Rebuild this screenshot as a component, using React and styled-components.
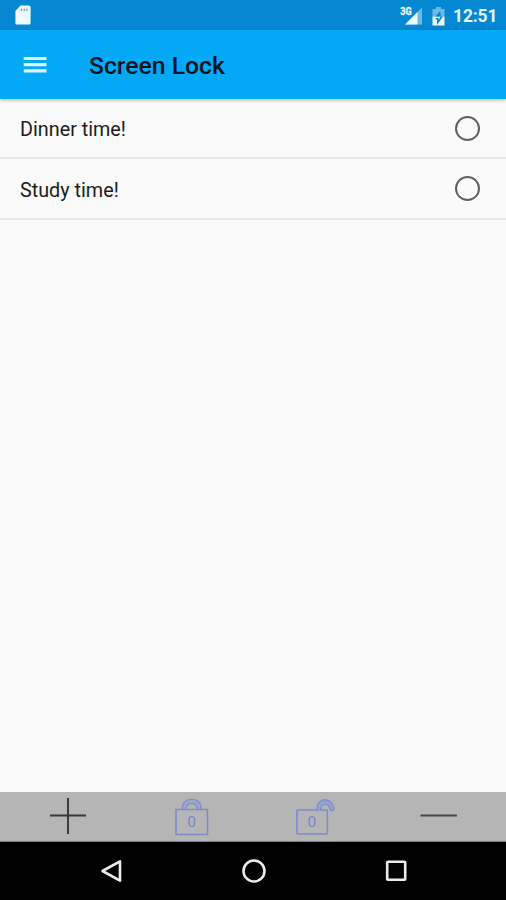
import React from "react";
import styled, { createGlobalStyle } from "styled-components";

const GlobalStyle = createGlobalStyle`
  * { box-sizing: border-box; }
  body { margin: 0; background: #fafafa; font-family: Roboto, "Noto Sans", sans-serif; }
  svg { display: block; }
`;

const Screen = styled.div`
  display: flex;
  flex-direction: column;
  width: 506px;
  height: 900px;
  background: #fafafa;
  overflow: hidden;
`;

const StatusBar = styled.div`
  display: flex;
  align-items: center;
  flex: none;
  height: 30px;
  padding: 1px 9px 0 14px;
  background: #0488d1;
`;

const StatusIcons = styled.div`
  display: flex;
  align-items: center;
  gap: 9px;
  margin-left: auto;
`;

const Clock = styled.span`
  width: 44px;
  margin-left: -2px;
  font-size: 17.5px;
  line-height: 28px;
  font-weight: 700;
  letter-spacing: -0.15px;
  color: #e4f4fc;
  white-space: nowrap;
`;

const AppBar = styled.header`
  display: flex;
  align-items: center;
  flex: none;
  height: 69px;
  padding: 0 23px;
  gap: 42px;
  background: #04a9f5;
  box-shadow: 0 1px 4px rgba(0, 0, 0, 0.3);
  z-index: 1;
`;

const Title = styled.h1`
  margin: 2px 0 0;
  font-size: 24.7px;
  line-height: 30px;
  font-weight: 500;
  color: #03161f;
  white-space: nowrap;
`;

const List = styled.main`
  flex: 1;
`;

const Row = styled.div`
  display: flex;
  align-items: center;
  justify-content: space-between;
  height: ${(p) => p.$height}px;
  padding: 0 26px 0 20px;
  border-bottom: 2px solid #e6e6e6;
`;

const RowLabel = styled.span`
  font-size: 19.8px;
  line-height: 26px;
  font-weight: 400;
  color: #1c1c1c;
  padding-top: ${(p) => p.$offset}px;
`;

const Radio = styled.span`
  width: 25px;
  height: 25px;
  border: 2px solid #5f5f5f;
  border-radius: 50%;
`;

const ActionBar = styled.footer`
  display: flex;
  justify-content: space-between;
  flex: none;
  height: 50px;
  padding: 0 48px;
  background: #b5b5b5;
  border-bottom: 1px solid #7c7c7c;
`;

const NavBar = styled.nav`
  display: flex;
  align-items: center;
  justify-content: space-between;
  flex: none;
  height: 58px;
  padding: 0 97px 0 98px;
  background: #000;
`;

const SdCardIcon = () => (
  <svg width="18" height="22" viewBox="0 0 18 22">
    <path d="M6.5 .5H15a1.600 1.600 0 0 1 1.600 1.600V18a1.600 1.600 0 0 1-1.600 1.600H3A1.600 1.600 0 0 1 1.400 18V6Z" fill="#eff9ff" />
    <path d="M7.500 3.700v2.200M10.300 3.700v2.200M13 3.700v2.200" stroke="#5aaede" strokeWidth="1.300" />
  </svg>
);

const SignalIcon = () => (
  <svg width="23" height="22" viewBox="0 0 23 22">
    <path d="M22 2.500V19.500H5Z" fill="#6dbbe5" />
    <path d="M17.500 7V19.500H5Z" fill="#eff9ff" />
    <text x="0.300" y="10" fontSize="10" fontWeight="700" fill="#eff9ff" stroke="#eff9ff" strokeWidth=".3" textLength="11.500" lengthAdjust="spacingAndGlyphs">3G</text>
  </svg>
);

const BatteryIcon = () => (
  <svg width="14" height="22" viewBox="0.500 0 14 22">
    <path d="M1 4h3.500V2h5v2H13v7.500H1Z" fill="#6dbbe5" />
    <path d="M1 11.500h12v9H1Z" fill="#eff9ff" />
    <path d="M8.500 6 4 11.500h5.500Z" fill="#0488d1" />
    <path d="M10.500 11.500 6.300 17.500v-3.800H4" fill="none" stroke="#0488d1" strokeWidth="1.600" />
  </svg>
);

const MenuIcon = () => (
  <svg width="24" height="18" viewBox="0 0 24 18">
    <path d="M.7 2.500h22.800M.7 8.700h22.800M.7 14.900h22.800" stroke="#dff5ff" strokeWidth="3.200" />
  </svg>
);

const PlusIcon = () => (
  <svg width="40" height="49" viewBox="0 0 40 49">
    <path d="M2 23.500h36M20 6v36" stroke="#383838" strokeWidth="1.900" />
  </svg>
);

const MinusIcon = () => (
  <svg width="40" height="49" viewBox="0 0 40 49">
    <path d="M2.500 23.500h36.500" stroke="#484848" strokeWidth="2.200" />
  </svg>
);

const LockIcon = () => (
  <svg width="40" height="49" viewBox="-0.700 0 40 49">
    <g fill="none" stroke="#7b8bd0" strokeWidth="1.500">
      <rect x="4.300" y="17.500" width="31.500" height="25" />
      <path d="M10.500 17.500v-1.500a9.500 8.800 0 0 1 19 0v1.500M14.500 17.500v-1.200a5.500 5 0 0 1 11 0v1.200" />
    </g>
    <path d="M12.500 17v-1a7.500 6.800 0 0 1 15 0v1" fill="none" stroke="#9aa5c8" strokeWidth="2" />
    <text x="20" y="35.200" textAnchor="middle" fontSize="15.500" fill="#7586d2">0</text>
  </svg>
);

const UnlockIcon = () => (
  <svg width="40" height="49" viewBox="-0.600 0 40 49">
    <g fill="none" stroke="#7b8bd0" strokeWidth="1.500">
      <rect x="1.300" y="18" width="30.500" height="24" rx=".8" />
      <path d="M21.300 18v-3c.6-4 4-7.300 8-7.300 4.800 0 8.700 4.200 9.300 9.300l-1.200 1.500-2.600-.3c-.8-3.300-2.600-5.700-5.300-5.700-3 0-4.300 2-4.500 5.500" fill="#94a1cc" strokeWidth="1.200" />
    </g>
    <text x="16.200" y="35" textAnchor="middle" fontSize="15.500" fill="#7586d2">0</text>
  </svg>
);

const BackIcon = () => (
  <svg width="28" height="28" viewBox="0 0 28 28">
    <path d="M4.500 14 22 4.300v19.400Z" fill="none" stroke="#ececec" strokeWidth="2.600" strokeLinejoin="round" />
  </svg>
);

const HomeIcon = () => (
  <svg width="28" height="28" viewBox="0 0 28 28">
    <circle cx="14" cy="14" r="10.500" fill="none" stroke="#ececec" strokeWidth="2.600" />
  </svg>
);

const RecentsIcon = () => (
  <svg width="28" height="28" viewBox="0 0 28 28">
    <rect x="6.200" y="4.800" width="18" height="18" rx=".8" fill="none" stroke="#ececec" strokeWidth="2.600" />
  </svg>
);

const items = [
  { label: "Dinner time!", height: 60, offset: 3 },
  { label: "Study time!", height: 61, offset: 4 },
];

export default function App() {
  return (
    <Screen>
      <GlobalStyle />
      <StatusBar>
        <SdCardIcon />
        <StatusIcons>
          <SignalIcon />
          <BatteryIcon />
          <Clock>12:51</Clock>
        </StatusIcons>
      </StatusBar>
      <AppBar>
        <MenuIcon />
        <Title>Screen Lock</Title>
      </AppBar>
      <List>
        {items.map((item) => (
          <Row key={item.label} $height={item.height}>
            <RowLabel $offset={item.offset}>{item.label}</RowLabel>
            <Radio />
          </Row>
        ))}
      </List>
      <ActionBar>
        <PlusIcon />
        <LockIcon />
        <UnlockIcon />
        <MinusIcon />
      </ActionBar>
      <NavBar>
        <BackIcon />
        <HomeIcon />
        <RecentsIcon />
      </NavBar>
    </Screen>
  );
}
